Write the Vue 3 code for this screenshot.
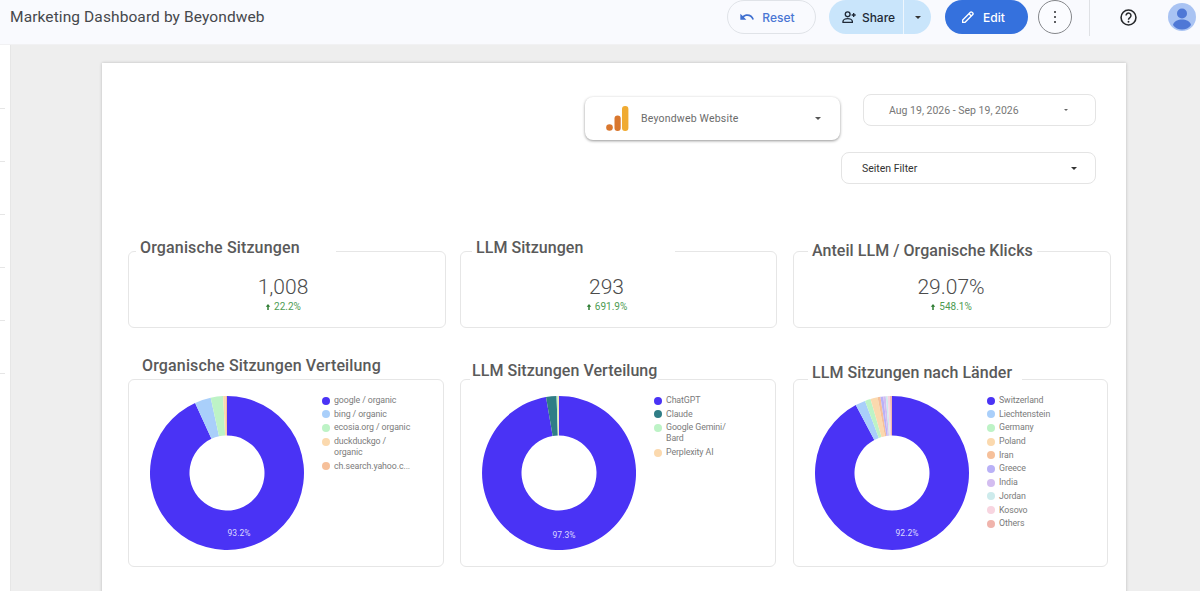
<script setup>
const TAU = Math.PI * 2
const R = 77
const r = 37.5
const C = 77

function arc(start, end) {
  const a0 = start * TAU
  const a1 = end * TAU
  const large = end - start > 0.5 ? 1 : 0
  const pt = (rad, a) => `${(C + rad * Math.sin(a)).toFixed(2)} ${(C - rad * Math.cos(a)).toFixed(2)}`
  return `M${pt(R, a0)}A${R} ${R} 0 ${large} 1 ${pt(R, a1)}L${pt(r, a1)}A${r} ${r} 0 ${large} 0 ${pt(r, a0)}Z`
}

function build(series) {
  let acc = 0
  return series.map((s) => {
    const start = acc
    acc += s.v / 100
    return { ...s, d: arc(start, acc) }
  })
}

const kpis = [
  { title: 'Organische Sitzungen', value: '1,008', delta: '22.2%', cls: 'k1' },
  { title: 'LLM Sitzungen', value: '293', delta: '691.9%', cls: 'k2' },
  { title: 'Anteil LLM / Organische Klicks', value: '29.07%', delta: '548.1%', cls: 'k3' },
]

const charts = [
  {
    title: 'Organische Sitzungen Verteilung',
    cls: 'c1',
    label: '93.2%',
    lx: 89,
    ly: 140,
    series: build([
      { name: 'google / organic', v: 93.2, color: '#4a33f5' },
      { name: 'bing / organic', v: 3.4, color: '#a9cffa' },
      { name: 'ecosia.org / organic', v: 2.6, color: '#bdf3c6' },
      { name: 'duckduckgo / organic', v: 0.5, color: '#fbd9ae' },
      { name: 'ch.search.yahoo.c...', v: 0.3, color: '#f6c09a' },
    ]),
  },
  {
    title: 'LLM Sitzungen Verteilung',
    cls: 'c2',
    label: '97.3%',
    lx: 82,
    ly: 142,
    series: build([
      { name: 'ChatGPT', v: 97.3, color: '#4a33f5' },
      { name: 'Claude', v: 2.2, color: '#2f7d86' },
      { name: 'Google Gemini/ Bard', v: 0.3, color: '#bdf3c6' },
      { name: 'Perplexity AI', v: 0.2, color: '#fbd9ae' },
    ]),
  },
  {
    title: 'LLM Sitzungen nach Länder',
    cls: 'c3',
    label: '92.2%',
    lx: 92,
    ly: 140,
    series: build([
      { name: 'Switzerland', v: 92.2, color: '#4a33f5' },
      { name: 'Liechtenstein', v: 2.1, color: '#a9cffa' },
      { name: 'Germany', v: 1.2, color: '#bdf3c6' },
      { name: 'Poland', v: 1.5, color: '#fbd9ae' },
      { name: 'Iran', v: 0.6, color: '#f6c09a' },
      { name: 'Greece', v: 0.6, color: '#b9b1f7' },
      { name: 'India', v: 0.5, color: '#d3bdf0' },
      { name: 'Jordan', v: 0.4, color: '#cdebec' },
      { name: 'Kosovo', v: 0.5, color: '#f8d5e0' },
      { name: 'Others', v: 0.4, color: '#f0b4ac' },
    ]),
  },
]

const ticks = [0, 1, 2, 3, 4, 5]
</script>

<template>
  <div class="app">
    <header class="topbar">
      <h1 class="doc-title">Marketing Dashboard by Beyondweb</h1>
      <div class="actions">
        <button class="btn reset">
          <svg class="ico" viewBox="0 0 24 24" fill="#3f6fd0"><path d="M12.5 8c-2.65 0-5.05 1-6.9 2.6L2 7v9h9l-3.62-3.62c1.39-1.16 3.16-1.88 5.12-1.88 3.54 0 6.55 2.31 7.6 5.5l2.37-.78C21.08 11.03 17.15 8 12.5 8z"/></svg>
          Reset
        </button>
        <div class="share">
          <button class="share-main">
            <svg class="ico" viewBox="0 0 24 24" fill="none" stroke="#1f2937" stroke-width="2"><circle cx="10" cy="8" r="3.6"/><path d="M3 20v-1.5c0-2.6 4-4 7-4s7 1.4 7 4V20z"/><path d="M19 6v6M16 9h6"/></svg>
            Share
          </button>
          <button class="share-more"><span class="caret dark"></span></button>
        </div>
        <button class="btn edit">
          <svg class="ico" viewBox="0 0 24 24" fill="none" stroke="#fff" stroke-width="2"><path d="M4 20v-3.6L15.6 4.8a1.6 1.6 0 0 1 2.3 0l1.3 1.3a1.6 1.6 0 0 1 0 2.3L7.6 20z"/><path d="M13.5 7l3.5 3.5"/></svg>
          Edit
        </button>
        <button class="kebab" aria-label="More">
          <i></i><i></i><i></i>
        </button>
        <span class="vr"></span>
        <svg class="help" viewBox="0 0 24 24" fill="none" stroke="#26282b" stroke-width="2"><circle cx="12" cy="12" r="9.4"/><path d="M8.9 9.6a3.1 3.1 0 1 1 4.9 2.5c-1.2.9-1.8 1.4-1.8 2.7" stroke-width="1.9"/><circle cx="12" cy="17.4" r="1.2" fill="#26282b" stroke="none"/></svg>
        <svg class="avatar" viewBox="0 0 28 28"><circle cx="14" cy="14" r="14" fill="#a9c3f3"/><circle cx="14" cy="10.5" r="5" fill="#4f78d6"/><path d="M5 22c1-4 5-5.500 9-5.500s8 1.500 9 5.500c-2 3-5.500 4.500-9 4.500S7 25 5 22z" fill="#4f78d6"/></svg>
      </div>
    </header>

    <main class="workspace">
      <aside class="rail">
        <span v-for="t in ticks" :key="t" class="tick"></span>
      </aside>
      <div class="canvas">
        <section class="page">
          <div class="controls">
            <div class="ga-select">
              <svg class="ga-logo" viewBox="0 0 24 26">
                <rect x="16" y="0" width="6.400" height="25" rx="3" fill="#f0ab32"/>
                <rect x="8.500" y="9.500" width="6.200" height="15.500" rx="3" fill="#d9772e"/>
                <circle cx="3.500" cy="21.500" r="3.300" fill="#d9772e"/>
              </svg>
              <span class="ga-name">Beyondweb Website</span>
              <span class="caret mid"></span>
            </div>
            <div class="right-controls">
              <div class="date-select">
                <span>Aug 19, 2026 - Sep 19, 2026</span>
                <span class="caret small"></span>
              </div>
              <div class="filter-select">
                <span>Seiten Filter</span>
                <span class="caret dark"></span>
              </div>
            </div>
          </div>

          <div class="kpi-row">
            <article v-for="k in kpis" :key="k.title" class="kpi" :class="k.cls">
              <h2 class="legend-title">{{ k.title }}</h2>
              <div class="kpi-value">{{ k.value }}</div>
              <div class="kpi-delta">
                <svg viewBox="0 0 8 10" class="arrow"><path d="M4 1 7 4.500H5V9H3V4.500H1z" fill="#2e7d32"/></svg>
                {{ k.delta }}
              </div>
            </article>
          </div>

          <div class="chart-row">
            <article v-for="c in charts" :key="c.title" class="chart" :class="c.cls">
              <h2 class="legend-title">{{ c.title }}</h2>
              <svg class="donut" viewBox="0 0 154 154">
                <path v-for="s in c.series" :key="s.name" :d="s.d" :fill="s.color" />
                <text :x="c.lx" :y="c.ly" class="pct">{{ c.label }}</text>
              </svg>
              <ul class="legend">
                <li v-for="s in c.series" :key="s.name">
                  <span class="dot" :style="{ background: s.color }"></span>
                  <span class="name">{{ s.name }}</span>
                </li>
              </ul>
            </article>
          </div>
        </section>
      </div>
    </main>
  </div>
</template>

<style>
html, body { margin: 0; height: 100%; overflow: hidden; background: #fff; }
</style>

<style scoped>
.app {
  width: 1200px;
  height: 591px;
  overflow: hidden;
  display: flex;
  flex-direction: column;
  font-family: Roboto, "Noto Sans", sans-serif;
  color: #5f6368;
}
.topbar {
  height: 44px;
  flex: none;
  background: #f9fafe;
  display: flex;
  align-items: flex-start;
  justify-content: space-between;
  box-sizing: border-box;
}
.doc-title {
  margin: 0;
  padding: 6px 0 0 10px;
  font-size: 15.5px;
  line-height: 22px;
  font-weight: 400;
  letter-spacing: 0.1px;
  color: #46484c;
}
.actions {
  display: flex;
  align-items: flex-start;
  padding-right: 4px;
}
button {
  font-family: Inter, Roboto, sans-serif;
  font-weight: 500;
  font-size: 12px;
  border: 0;
  padding: 0;
  margin: 0;
  display: flex;
  align-items: center;
  justify-content: center;
}
.ico { width: 16px; height: 16px; flex: none; }
.btn {
  height: 34px;
  border-radius: 17px;
  gap: 7px;
  box-sizing: border-box;
}
.reset {
  width: 89px;
  background: #f9fafe;
  border: 1px solid #e0e3e8;
  color: #4a76d4;
  margin-right: 13px;
  padding-right: 9px;
}
.share {
  display: flex;
  width: 102px;
  height: 34px;
  border-radius: 17px;
  overflow: hidden;
  background: #c9e5fb;
  margin-right: 14px;
}
.share-main {
  width: 75px;
  gap: 5px;
  padding-left: 4px;
  background: transparent;
  color: #1f2a37;
  border-right: 1px solid #eef6fd;
  box-sizing: border-box;
}
.share-more {
  flex: 1;
  background: transparent;
}
.edit {
  width: 83px;
  background: #3571dd;
  color: #fff;
  margin-right: 10px;
  padding-right: 8px;
}
.kebab {
  width: 34px;
  height: 34px;
  border-radius: 50%;
  border: 1px solid #85878b;
  background: #fbfcff;
  flex-direction: column;
  gap: 2.5px;
  box-sizing: border-box;
  margin-right: 17px;
}
.kebab i {
  width: 2.5px;
  height: 2.5px;
  border-radius: 50%;
  background: #2b2d30;
}
.vr {
  width: 1px;
  height: 36px;
  background: #dfe1e5;
  margin-right: 29px;
}
.help {
  width: 19px;
  height: 19px;
  margin: 7.5px 30px 0 0;
}
.avatar {
  width: 28px;
  height: 28px;
  margin-top: 3px;
}
.workspace {
  flex: 1;
  display: flex;
  min-height: 0;
  border-top: 1px solid #f1f1f3;
}
.rail {
  width: 10px;
  flex: none;
  background: #fff;
  display: flex;
  flex-direction: column;
  gap: 52px;
  padding-top: 63px;
  box-sizing: border-box;
}
.tick {
  width: 5px;
  height: 1px;
  background: #e6e6e6;
}
.canvas {
  flex: 1;
  background: #eeeeee;
  border-left: 1px solid #e6e6e6;
  padding: 18px 0 0 91px;
  box-sizing: border-box;
  min-width: 0;
}
.page {
  width: 1024px;
  height: 700px;
  background: #fff;
  box-shadow: 0 0 3px rgba(0, 0, 0, 0.22);
  padding: 31px 0 0 26px;
  box-sizing: border-box;
}
.caret {
  width: 0;
  height: 0;
  display: inline-block;
  border-left: 3.5px solid transparent;
  border-right: 3.5px solid transparent;
  border-top: 3.5px solid #333;
}
.caret.mid { border-top-color: #555; }
.caret.small {
  border-left-width: 2.5px;
  border-right-width: 2.5px;
  border-top: 2.5px solid #666;
}
.controls {
  display: flex;
  justify-content: flex-end;
  align-items: flex-start;
  padding-right: 30px;
  height: 157px;
}
.ga-select {
  width: 255px;
  height: 43px;
  margin-top: 3px;
  margin-right: 1px;
  border-radius: 8px;
  background: #fff;
  box-shadow: 0 1px 3px rgba(0, 0, 0, 0.42);
  display: flex;
  align-items: center;
  padding: 0 19px 0 21px;
  box-sizing: border-box;
}
.ga-logo { width: 24px; height: 26px; flex: none; }
.ga-name {
  flex: 1;
  margin-left: 11px;
  font-size: 10.5px;
  letter-spacing: 0.2px;
  color: #6b6b6b;
}
.right-controls {
  width: 255px;
  display: flex;
  flex-direction: column;
  align-items: flex-end;
  gap: 26px;
}
.date-select,
.filter-select {
  height: 32px;
  border: 1px solid #e4e4e4;
  border-radius: 8px;
  box-sizing: border-box;
  display: flex;
  align-items: center;
  justify-content: space-between;
  font-size: 10.500px;
}
.date-select {
  width: 233px;
  padding: 0 27px 0 25px;
  color: #777;
}
.filter-select {
  width: 255px;
  padding: 0 18px 0 20px;
  color: #333;
}
.kpi-row {
  display: grid;
  grid-template-columns: 318px 317px 320px;
  column-gap: 14px;
}
.kpi, .chart {
  position: relative;
  box-sizing: border-box;
  border: 1.5px solid #e6e6e6;
  border-radius: 6px;
  background: #fff;
}
.kpi {
  height: 77px;
  text-align: center;
  padding-top: 22px;
}
.k1 { padding-right: 8px; }
.k2 { padding-right: 24px; }
.k3 { margin-left: 2px; padding-right: 2px; }
.legend-title {
  position: absolute;
  margin: 0;
  background: #fff;
  font-family: Roboto, sans-serif;
  font-size: 16px;
  font-weight: 500;
  line-height: 20px;
  letter-spacing: 0.05px;
  color: #5a5a5a;
  white-space: nowrap;
}
.k1 .legend-title { left: 7px; top: -14px; padding: 0 36px 0 4px; letter-spacing: 0.15px; }
.k2 .legend-title { left: 11px; top: -14px; padding: 0 92px 0 4px; }
.k3 .legend-title { left: 14px; top: -11px; padding: 0 4px; }
.kpi-value {
  font-size: 21px;
  line-height: 27px;
  font-weight: 300;
  color: #4c4c4c;
}
.kpi-delta {
  font-size: 10px;
  line-height: 12px;
  color: #4d9b52;
  display: flex;
  gap: 3px;
  justify-content: center;
  align-items: center;
}
.arrow { width: 6px; height: 8px; }
.chart-row {
  display: grid;
  grid-template-columns: 316px 316px 316px;
  column-gap: 16px;
  margin-top: 51px;
}
.chart {
  height: 188px;
  display: flex;
  align-items: flex-start;
  padding: 15.5px 0 0 21px;
}
.c3 { margin-left: 1px; }
.c1 .legend-title { left: 13px; top: -24px; background: transparent; letter-spacing: 0.15px; }
.c2 .legend-title { left: 9px; top: -19px; padding: 0 1px 0 2px; }
.c3 .legend-title { left: 14px; top: -17px; padding: 0 10px 0 4px; }
.donut {
  width: 154px;
  height: 154px;
  flex: none;
}
.pct {
  font-size: 8.500px;
  fill: #dcd9ff;
  font-family: Roboto, sans-serif;
  text-anchor: middle;
}
.legend {
  list-style: none;
  margin: 0;
  padding: 0;
  margin-left: 18px;
  margin-top: -0.5px;
  width: 90px;
}
.legend li {
  display: flex;
  align-items: flex-start;
  font-size: 8.800px;
  line-height: 11px;
  letter-spacing: -0.1px;
  color: #7b7b7b;
  padding-bottom: 2.700px;
}
.dot {
  width: 8px;
  height: 8px;
  border-radius: 50%;
  flex: none;
  margin: 1.500px 4px 0 0;
}
</style>
